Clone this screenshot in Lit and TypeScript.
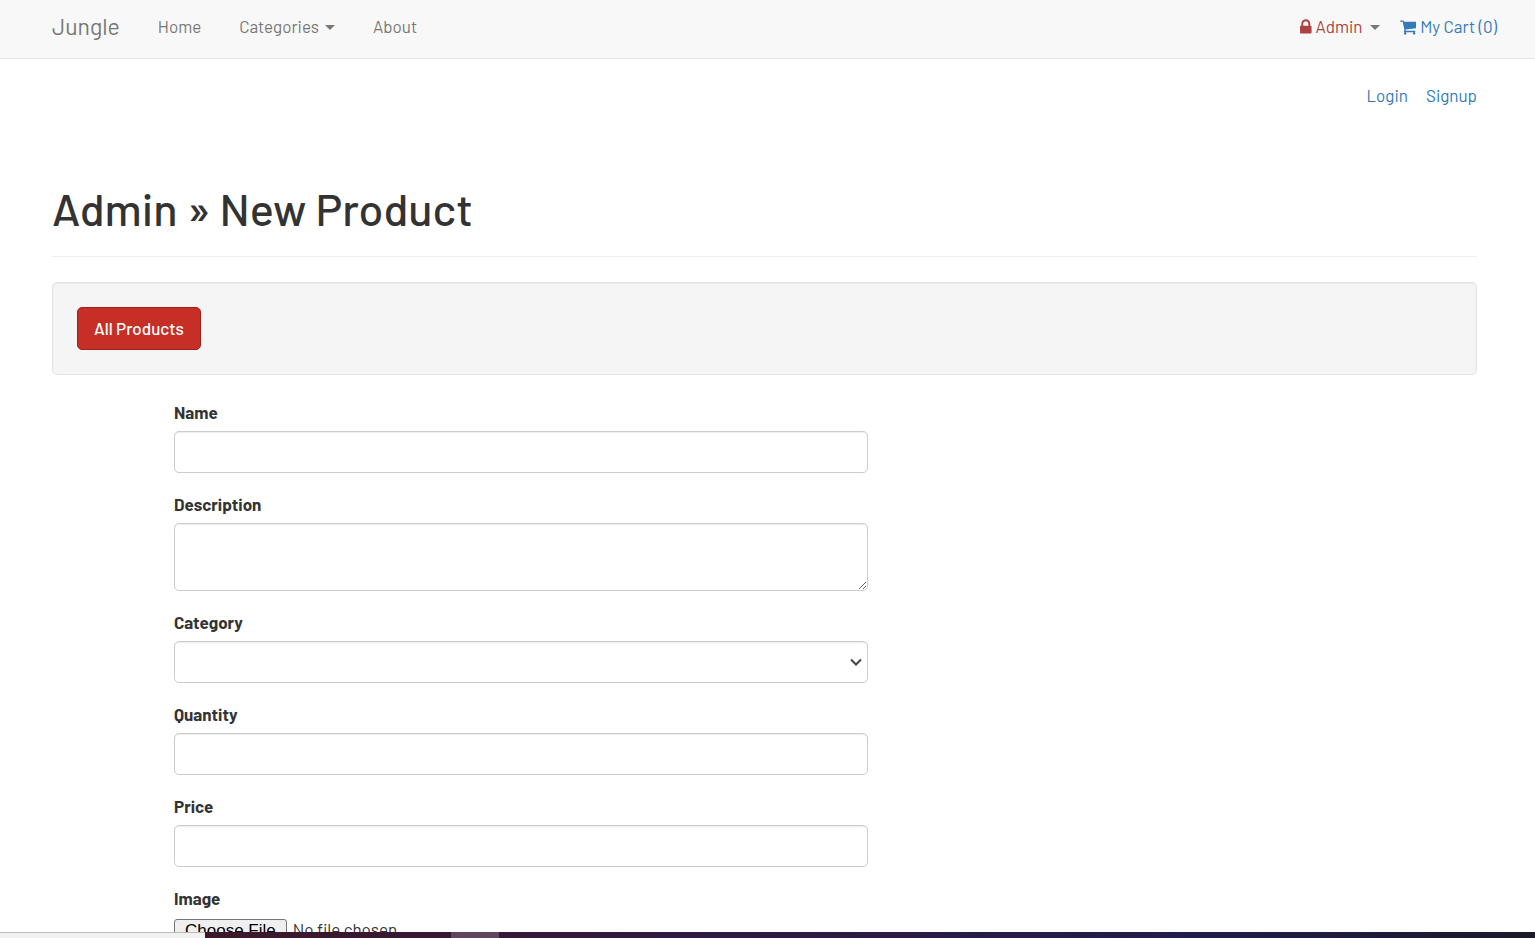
import { LitElement, html, css, svg } from "lit";
import { customElement } from "lit/decorators.js";

const lockIcon = svg`<path d="M320 768h512v-192q0-106-75-181t-181-75-181 75-75 181v192zm832 96v576q0 40-28 68t-68 28h-960q-40 0-68-28t-28-68v-576q0-40 28-68t68-28h32v-192q0-184 132-316t316-132 316 132 132 316v192h32q40 0 68 28t28 68z"/>`;
const cartIcon = svg`<path d="M640 1536q0 52-38 90t-90 38-90-38-38-90 38-90 90-38 90 38 38 90zm896 0q0 52-38 90t-90 38-90-38-38-90 38-90 90-38 90 38 38 90zm128-1088v512q0 24-16.5 42.5t-40.5 21.5l-1044 122q13 60 13 70 0 16-24 64h920q26 0 45 19t19 45-19 45-45 19h-1024q-26 0-45-19t-19-45q0-11 8-31.5t16-36 21.5-40 15.5-29.5l-177-823h-204q-26 0-45-19t-19-45 19-45 45-19h256q16 0 28.5 6.5t19.5 15.5 13 24.5 8 26 5.5 29.5 4.5 26h1201q26 0 45 19t19 45z"/>`;

@customElement("app-root")
export class AppRoot extends LitElement {
  static styles = css`
    :host {
      display: flex;
      flex-direction: column;
      height: 100vh;
      overflow: hidden;
      background: #fff;
      color: #333;
      font-family: Barlow, Roboto, "Liberation Sans", sans-serif;
      font-size: 17px;
      line-height: 24px;
      font-weight: 400;
    }
    * {
      box-sizing: border-box;
    }
    a {
      color: #337ab7;
      text-decoration: none;
    }
    .page {
      flex: 1;
      min-height: 0;
      overflow: hidden;
    }
    .navbar {
      display: flex;
      align-items: center;
      justify-content: space-between;
      padding: 14px 38px 20px 52px;
      background: #f8f8f8;
      border-bottom: 1px solid #e7e7e7;
    }
    .group {
      display: flex;
      align-items: center;
      gap: 38px;
    }
    .account {
      gap: 20px;
    }
    .navbar .link {
      color: #777;
    }
    .navbar .brand {
      color: #777;
      font-size: 23px;
    }
    .link,
    .item {
      display: flex;
      align-items: center;
    }
    .navbar .danger {
      color: #a94442;
    }
    .item {
      gap: 4px;
    }
    .caret {
      margin-top: 3px;
      margin-left: 6px;
      border-top: 5px solid #777;
      border-left: 5px solid transparent;
      border-right: 5px solid transparent;
    }
    .item .caret {
      margin-left: 3px;
    }
    .icon {
      height: 18px;
      margin-top: 1px;
      fill: currentColor;
    }
    .container {
      padding: 0 58px 0 52px;
    }
    .session {
      display: flex;
      justify-content: flex-end;
      gap: 18px;
      padding-top: 24px;
    }
    .title {
      margin: 76px 0 25px;
      padding-bottom: 23px;
      border-bottom: 1px solid #eee;
      font-size: 45px;
      line-height: 50px;
      font-weight: 500;
    }
    .well {
      margin-bottom: 25px;
      padding: 24px;
      background: #f5f5f5;
      border: 1px solid #e3e3e3;
      border-radius: 5px;
      box-shadow: inset 0 1px 1px rgba(0, 0, 0, 0.05);
    }
    .button {
      display: block;
      width: fit-content;
      padding: 9px 16px;
      color: #fff;
      background: #c62f25;
      border: 1px solid #9e211a;
      border-radius: 5px;
      font-weight: 500;
      line-height: 23px;
    }
    .form {
      display: flex;
      flex-direction: column;
      gap: 19px;
      width: 48.7%;
      margin-left: 122px;
    }
    .field {
      display: flex;
      flex-direction: column;
      gap: 6px;
    }
    .label {
      font-weight: 700;
      line-height: 25px;
    }
    .control {
      display: block;
      width: 100%;
      height: 42px;
      padding: 8px 15px;
      color: #555;
      background: #fff;
      border: 1px solid #ccc;
      border-radius: 5px;
      box-shadow: inset 0 1px 1px rgba(0, 0, 0, 0.075);
      font: inherit;
    }
    .area {
      height: 68px;
    }
    .picker {
      appearance: none;
    }
    .select {
      display: grid;
      align-items: center;
    }
    .select > * {
      grid-area: 1 / 1;
    }
    .chevron {
      justify-self: end;
      width: 12px;
      margin-right: 6px;
      fill: none;
      stroke: #444;
      stroke-width: 2;
      pointer-events: none;
    }
    .file {
      font: inherit;
      color: #333;
    }
    .file::file-selector-button {
      font-family: "Liberation Sans", Arial, sans-serif;
      font-size: 17px;
      font-weight: 400;
      padding: 1px 10px;
      margin-right: 6px;
      color: #000;
      background: #efefef;
      border: 1px solid #767676;
      border-radius: 3px;
    }
    .desktop {
      display: flex;
      height: 6px;
      background: linear-gradient(90deg, #3c1929 14%, #35193c 35%, #211d4b 78%, #1b1a2b);
    }
    .status {
      width: 205px;
      background: #f1f1f1;
      border-top: 1px solid #bbb;
    }
    .task {
      width: 48px;
      margin-left: 246px;
      background: #60455e;
    }
  `;

  render() {
    return html`
      <div class="page">
        <nav class="navbar">
          <div class="group">
            <a class="brand" href="#">Jungle</a>
            <a class="link" href="#">Home</a>
            <a class="link" href="#">Categories<span class="caret"></span></a>
            <a class="link" href="#">About</a>
          </div>
          <div class="group account">
            <a class="item danger" href="#"
              ><svg class="icon" viewBox="0 0 1152 1792" aria-hidden="true">${lockIcon}</svg>Admin<span class="caret"></span
            ></a>
            <a class="item" href="#"
              ><svg class="icon" viewBox="0 0 1664 1792" aria-hidden="true">${cartIcon}</svg>My Cart (0)</a
            >
          </div>
        </nav>
        <main class="container">
          <div class="session"><a href="#">Login</a><a href="#">Signup</a></div>
          <h1 class="title">Admin » New Product</h1>
          <div class="well"><a class="button" href="#">All Products</a></div>
          <form class="form">
            <div class="field">
              <label class="label" for="name">Name</label>
              <input class="control" id="name" type="text" />
            </div>
            <div class="field">
              <label class="label" for="description">Description</label>
              <textarea class="control area" id="description"></textarea>
            </div>
            <div class="field">
              <label class="label" for="category">Category</label>
              <div class="select">
                <select class="control picker" id="category">
                  <option></option>
                </select>
                <svg class="chevron" viewBox="0 0 12 8" aria-hidden="true"><path d="M1 1.5l5 5 5-5" /></svg>
              </div>
            </div>
            <div class="field">
              <label class="label" for="quantity">Quantity</label>
              <input class="control" id="quantity" type="text" />
            </div>
            <div class="field">
              <label class="label" for="price">Price</label>
              <input class="control" id="price" type="text" />
            </div>
            <div class="field">
              <label class="label" for="image">Image</label>
              <input class="file" id="image" type="file" />
            </div>
          </form>
        </main>
      </div>
      <div class="desktop">
        <div class="status"></div>
        <div class="task"></div>
      </div>
    `;
  }
}
